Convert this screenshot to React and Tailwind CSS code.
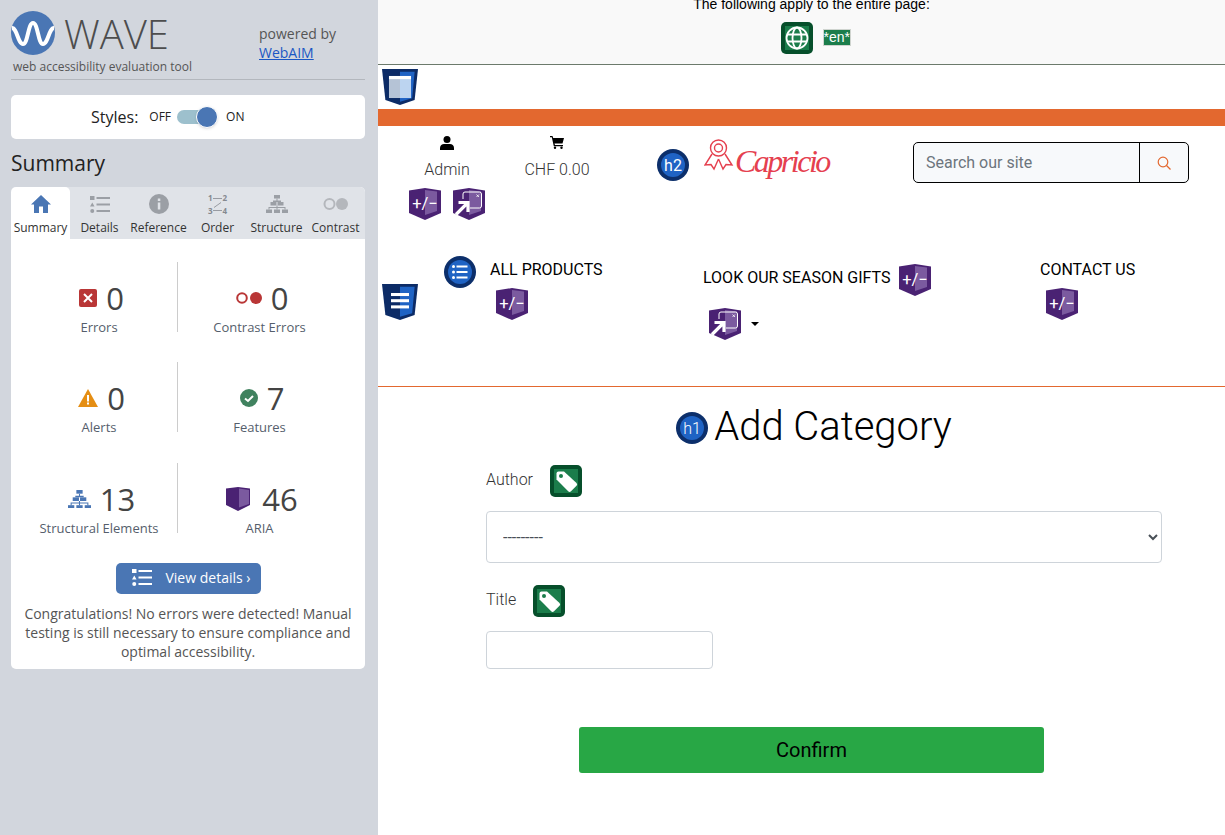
import React from "react";

const Shield = ({ size = 32, dark = "#4a2273", light = "#7b5a9f", children }) => (
  <svg width={size} height={size} viewBox="0 0 32 32" className="shrink-0 block">
    <polygon points="0,2.5 16,0 32,2.5 32,25 16,32 0,25" fill={dark} />
    <polygon points="16,2 28,3.5 28,23 16,27" fill={light} />
    {children}
  </svg>
);

const AriaIcon = () => (
  <Shield>
    <text x="16" y="20.5" textAnchor="middle" fill="#fff" fontSize="16.500" fontFamily="Roboto, sans-serif">
      +/−
    </text>
  </Shield>
);

const PopupIcon = () => (
  <Shield>
    <path d="M10 11V6a2 2 0 0 1 2-2h14.500a2 2 0 0 1 2 2v12a2 2 0 0 1-2 2H17" fill="none" stroke="#fff" strokeWidth="1" />
    <path d="M23.500 6.500l2.500 2.500m0-2.500L23.500 9" stroke="#fff" strokeWidth="0.8" />
    <path d="M3 26.500 L13.500 16 M5.500 14.500h9.500v9.500" fill="none" stroke="#fff" strokeWidth="3.200" />
  </Shield>
);

// landmark shield is narrower at the bottom than the aria one
const Landmark = ({ children }) => (
  <svg width="36" height="36" viewBox="0 0 32 32" className="shrink-0 block">
    <polygon points="0,0 32,0 29,27.500 16,32 3,27.500" fill="#0c2b66" />
    <polygon points="16,2.500 29,2.500 26.800,26 16,29" fill="#1f63c4" />
    {children}
  </svg>
);

const Badge = ({ children }) => (
  <svg width="32" height="32" viewBox="0 0 32 32" className="shrink-0 block">
    <circle cx="16" cy="16" r="16" fill="#0c2f6b" />
    <circle cx="16" cy="16" r="12" fill="#1f63c4" />
    {children}
  </svg>
);

const HeadingBadge = ({ label }) => (
  <Badge>
    <text x="16" y="21.500" textAnchor="middle" fill="#fff" fontSize="16" fontFamily="Roboto, sans-serif">
      {label}
    </text>
  </Badge>
);

const TagIcon = () => (
  <svg width="32" height="32" viewBox="0 0 32 32" className="shrink-0 block">
    <rect width="32" height="32" rx="5" fill="#064f2b" />
    <rect x="4" y="4" width="24" height="24" fill="#1b7d4b" />
    <path d="M6.500 8.500a2 2 0 0 1 2-2h5.500l12.500 11.500a2 2 0 0 1 0 2.800l-5.500 5.500a2 2 0 0 1-2.800 0L6.500 14.500z" fill="#fff" />
    <circle cx="11" cy="11" r="2" fill="#1b7d4b" />
  </svg>
);

const GlobeIcon = () => (
  <svg width="32" height="32" viewBox="0 0 32 32" className="shrink-0 block">
    <rect width="32" height="32" rx="5" fill="#064f2b" />
    <rect x="4" y="4" width="24" height="24" fill="#1b7d4b" />
    <g fill="none" stroke="#fff" strokeWidth="1.800">
      <circle cx="16" cy="16" r="10.500" />
      <ellipse cx="16" cy="16" rx="4.500" ry="10.500" />
      <path d="M6 12.500h20M6 19.500h20" />
    </g>
  </svg>
);

const ListLines = ({ color }) => (
  <svg width="20" height="17" viewBox="0 0 20 17" className="block">
    <g fill={color}>
      <rect x="0" y="0" width="4.500" height="4" />
      <polygon points="2.250,6.500 4.500,10.500 0,10.500" />
      <circle cx="2.250" cy="15" r="2" />
      <rect x="6.500" y="1" width="13.500" height="2" />
      <rect x="6.500" y="7.500" width="13.500" height="2" />
      <rect x="6.500" y="14" width="13.500" height="2" />
    </g>
  </svg>
);

const TreeIcon = ({ color, size = 22 }) => (
  <svg width={size} height={size * 0.82} viewBox="0 0 22 18" className="block">
    <g fill={color}>
      <rect x="8" y="0" width="6" height="3.500" />
      <rect x="4.500" y="7" width="6" height="3.500" />
      <rect x="11.500" y="7" width="6" height="3.500" />
      <rect x="0" y="14.500" width="6" height="3.500" />
      <rect x="8" y="14.500" width="6" height="3.500" />
      <rect x="16" y="14.500" width="6" height="3.500" />
      <path d="M10.500 3.500h1v3.500h-1zM7 5.500h8v1.500H7zM3 12h16v1h-16zM2.500 12h1v2.500h-1zM10.500 10.500h1v4h-1zM18.500 12h1v2.500h-1z" />
    </g>
  </svg>
);

const tabs = [
  {
    label: "Summary",
    active: true,
    icon: (
      <svg width="20" height="18" viewBox="0 0 20 18">
        <path d="M10 0 L20 9.500 H17 V18 H12 V11.500 H8 V18 H3 V9.500 H0 Z" fill="#4a76b4" />
      </svg>
    ),
  },
  { label: "Details", icon: <ListLines color="#9b9fa5" /> },
  {
    label: "Reference",
    icon: (
      <svg width="20" height="20" viewBox="0 0 20 20">
        <circle cx="10" cy="10" r="10" fill="#9b9fa5" />
        <rect x="8.800" y="8.500" width="2.500" height="7" fill="#e0e3e8" />
        <rect x="8.800" y="4.500" width="2.500" height="2.500" fill="#e0e3e8" />
      </svg>
    ),
  },
  {
    label: "Order",
    icon: (
      <svg width="20" height="20" viewBox="0 0 20 20" className="overflow-visible" fontFamily="'Open Sans', sans-serif" fontSize="8" fontWeight="700" fill="#85898f">
        <text x="0" y="7">1</text>
        <text x="14.500" y="7">2</text>
        <text x="0" y="19.500">3</text>
        <text x="14.500" y="19.500">4</text>
        <path d="M5 4.500h9M5 16.500h9M13 8.500l-7 5" stroke="#85898f" strokeWidth="0.800" fill="none" />
      </svg>
    ),
  },
  { label: "Structure", icon: <TreeIcon color="#9b9fa5" /> },
  {
    label: "Contrast",
    icon: (
      <svg width="26" height="14" viewBox="0 0 26 14">
        <circle cx="6.500" cy="7" r="5" fill="none" stroke="#b4b7bc" strokeWidth="2" />
        <circle cx="19" cy="7" r="6" fill="#b4b7bc" />
      </svg>
    ),
  },
];

const stats = [
  {
    value: "0",
    label: "Errors",
    icon: (
      <svg width="18" height="18" viewBox="0 0 18 18">
        <rect width="18" height="18" rx="2" fill="#b93636" />
        <path d="M5 5l8 8m0-8l-8 8" stroke="#fff" strokeWidth="2" />
      </svg>
    ),
  },
  {
    value: "0",
    label: "Contrast Errors",
    icon: (
      <svg width="26" height="12" viewBox="0 0 26 12">
        <circle cx="6" cy="6" r="4.800" fill="none" stroke="#b93636" strokeWidth="2" />
        <circle cx="20" cy="6" r="6" fill="#b93636" />
      </svg>
    ),
  },
  {
    value: "0",
    label: "Alerts",
    icon: (
      <svg width="20" height="18" viewBox="0 0 20 18">
        <polygon points="10,0 20,18 0,18" fill="#e58e13" />
        <rect x="9" y="6" width="2" height="6.500" fill="#fff" />
        <rect x="9" y="13.500" width="2" height="2" fill="#fff" />
      </svg>
    ),
  },
  {
    value: "7",
    label: "Features",
    icon: (
      <svg width="18" height="18" viewBox="0 0 18 18">
        <circle cx="9" cy="9" r="9" fill="#40825f" />
        <path d="M5 9.500l3 2.500 5-5" fill="none" stroke="#fff" strokeWidth="2" />
      </svg>
    ),
  },
  { value: "13", label: "Structural Elements", icon: <TreeIcon color="#4a76b4" size={23} /> },
  {
    value: "46",
    label: "ARIA",
    icon: (
      <svg width="24" height="24" viewBox="0 0 24 24" className="mr-[3px]">
        <polygon points="0,1.500 12,0 24,1.500 24,18 12,24 0,18" fill="#4a2273" />
        <polygon points="13,1.500 23,3 23,17 13,20.500" fill="#7b5a9f" />
      </svg>
    ),
  },
];

const Sidebar = () => (
  <aside className="w-[378px] shrink-0 bg-[#d2d6dd] pl-[11px] pr-[13px] font-['Open_Sans',sans-serif]">
    <div className="h-[80px] border-b border-[#b3b7bd]">
      <div className="flex pt-[11px]">
        <svg width="44" height="44" viewBox="0 0 44 44" className="shrink-0">
          <circle cx="22" cy="22" r="22" fill="#4a76b4" />
          <path d="M1 17 C6 17 7 33 12 33 C17 33 17 12 22 12 C27 12 27 33 32 33 C37 33 38 17 43 17" fill="none" stroke="#fff" strokeWidth="4" />
        </svg>
        <span className="ml-[9px] mt-[1px] text-[40px] leading-[44px] font-light text-[#4d4d4d]">WAVE</span>
        <div className="ml-auto mr-[26px] mt-[13px] w-[80px] text-[14px] leading-[19px] text-[#555]">
          powered by
          <a href="#webaim" className="block text-[#1a56c4] underline">WebAIM</a>
        </div>
      </div>
      <p className="ml-[2px] -mt-[3px] text-[12px] leading-[16px] text-[#555]">web accessibility evaluation tool</p>
    </div>

    <div className="mt-[15px] h-[44px] bg-white rounded-[5px] flex items-center pl-[80px] gap-[11px] text-[#222]">
      <span className="text-[16px]">Styles:</span>
      <div className="flex items-center gap-[6px] text-[12px]">
        <span>OFF</span>
        <span className="relative w-[30px] h-[14px] rounded-full bg-[#9dc0cd]">
          <span className="absolute right-[-11px] top-[-4px] w-[22px] h-[22px] rounded-full bg-[#4a76b4] border border-white shadow"></span>
        </span>
        <span className="ml-[13px]">ON</span>
      </div>
    </div>

    <h2 className="mt-[10px] text-[21px] leading-[28px] text-[#222]">Summary</h2>

    <div className="mt-[10px] bg-white rounded-[5px] overflow-hidden">
      <div className="grid grid-cols-6 bg-[#e0e3e8] h-[52px]">
        {tabs.map((tab) => (
          <div
            key={tab.label}
            className={`flex flex-col items-center text-[12px] leading-[16px] text-[#333] ${tab.active ? "bg-white rounded-t-[5px]" : ""}`}
          >
            <div className="h-[33px] flex items-center justify-center pt-[1px]">{tab.icon}</div>
            {tab.label}
          </div>
        ))}
      </div>

      <div className="grid grid-cols-2 mt-[23px] gap-y-[30px] w-[332px]">
        {stats.map((stat, i) => (
          <div
            key={stat.label}
            className={`h-[70px] flex flex-col items-center ${i % 2 === 0 ? "border-r border-[#ccc] w-[167px] pl-[10px]" : "w-[165px]"} ${i >= 4 ? "mt-px" : ""}`}
          >
            <div className="flex items-center gap-[9px] h-[32px] mt-[20px] ml-[5px] shrink-0">
              {stat.icon}
              <span className="text-[31px] leading-[32px] text-[#444]">{stat.value}</span>
            </div>
            <span className="mt-[4px] shrink-0 text-[13px] leading-[18px] text-[#555e6c]">{stat.label}</span>
          </div>
        ))}
      </div>

      <div className="flex justify-center mt-[30px]">
        <a href="#details" className="w-[145px] h-[31px] pl-[7px] pb-[2px] rounded-[5px] bg-[#4a76b4] text-white flex items-center justify-center gap-[13px] text-[14px]">
          <ListLines color="#fff" />
          View details ›
        </a>
      </div>
      <p className="mt-[10px] pb-[8px] px-[10px] text-center text-[14px] leading-[19px] text-[#555]">
        Congratulations! No errors were detected! Manual testing is still necessary to ensure compliance and optimal accessibility.
      </p>
    </div>
  </aside>
);

const Header = () => (
  <div className="flex h-[100px] text-[#333]">
    <div className="ml-[26px] w-[86px] flex flex-col items-center">
      <svg width="14" height="14" viewBox="0 0 14 14" className="mt-[10px]">
        <circle cx="7" cy="3.500" r="3.500" />
        <path d="M0 14v-2c0-2.500 2-4 4-4h6c2 0 4 1.500 4 4v2z" />
      </svg>
      <span className="mt-[10px] text-[16px] leading-[19px] font-light">Admin</span>
      <div className="flex gap-[12px] mt-[9px]">
        <AriaIcon />
        <PopupIcon />
      </div>
    </div>
    <div className="w-[134px] flex flex-col items-center">
      <svg width="14" height="13" viewBox="0 0 14 13" className="mt-[10px]">
        <path d="M0 0h2.500l.7 2H14l-1.500 5.500H4.500L5 9h8v1.200H3.800L1.800 1.200H0z" />
        <circle cx="5" cy="11.800" r="1.200" />
        <circle cx="11.500" cy="11.800" r="1.200" />
      </svg>
      <span className="mt-[11px] text-[16px] leading-[19px] font-light">CHF 0.00</span>
    </div>
    <div className="ml-[33px] mt-[23px]">
      <HeadingBadge label="h2" />
    </div>
    <div className="ml-[15px] mt-[13px] flex items-start">
      <svg width="30" height="32" viewBox="0 0 30 32" fill="none" stroke="#e5404f" strokeWidth="1.400">
        <circle cx="14.500" cy="9" r="8" />
        <circle cx="14.500" cy="9" r="4" />
        <path d="M8 15L1 26l6-.5 3 4.500 4.500-10M21 15l7 11-6-.5-3 4.500-4.500-10" />
      </svg>
      <span className="ml-[1px] mt-[2px] text-[32px] leading-[40px] tracking-[-2.500px] italic font-['Liberation_Serif',serif] text-[#e5404f]">Capricio</span>
    </div>
    <div className="ml-auto mr-[36px] mt-[16px] w-[276px] h-[41px] flex border border-black rounded-[5px] bg-[#f7f9fb]">
      <span className="flex-1 border-r border-black pl-[12px] text-[16px] leading-[39px] text-[#6c757d]">Search our site</span>
      <span className="w-[48px] flex items-center justify-center">
        <svg width="14" height="14" viewBox="0 0 14 14" fill="none" stroke="#e3682f" strokeWidth="1.200">
          <circle cx="6" cy="6" r="4.800" />
          <path d="M9.500 9.500L13.500 13.500" />
        </svg>
      </span>
    </div>
  </div>
);

const Nav = () => (
  <nav className="flex h-[161px] border-b border-[#e3682f] text-[16px] leading-[20px] text-black">
    <div className="ml-[4px] mt-[58px]">
      <Landmark>
        <g fill="#fff">
          <rect x="8" y="8" width="16" height="2.700" />
          <rect x="8" y="13.500" width="16" height="2.700" />
          <rect x="8" y="19" width="16" height="2.700" />
        </g>
      </Landmark>
    </div>
    <div className="ml-[26px] mt-[30px]">
      <Badge>
        <g fill="#fff">
          <circle cx="9.500" cy="10.500" r="1.500" />
          <circle cx="9.500" cy="16" r="1.500" />
          <circle cx="9.500" cy="21.500" r="1.500" />
          <rect x="12.500" y="9.500" width="11" height="2" />
          <rect x="12.500" y="15" width="11" height="2" />
          <rect x="12.500" y="20.500" width="11" height="2" />
        </g>
      </Badge>
    </div>
    <div className="ml-[14px] w-[213px] mt-[34px]">
      ALL PRODUCTS
      <div className="ml-[6px] mt-[8px]">
        <AriaIcon />
      </div>
    </div>
    <div className="w-[337px] mt-[38px]">
      <div className="flex items-center gap-[9px]">
        <span className="mb-[4px]">LOOK OUR SEASON GIFTS</span>
        <AriaIcon />
      </div>
      <div className="flex items-center ml-[6px] mt-[12px] gap-[10px]">
        <PopupIcon />
        <span className="w-0 h-0 border-x-[4px] border-x-transparent border-t-[4px] border-t-black"></span>
      </div>
    </div>
    <div className="mt-[34px]">
      CONTACT US
      <div className="ml-[6px] mt-[8px]">
        <AriaIcon />
      </div>
    </div>
  </nav>
);

const Form = () => (
  <main className="text-[#333]">
    <h1 className="mt-[16px] flex items-center justify-center gap-[6px] ml-[25px] h-[48px] text-[40px] leading-[48px] font-light text-black">
      <div className="mt-[2px]">
        <HeadingBadge label="h1" />
      </div>
      Add Category
    </h1>
    <div className="ml-[108px] mr-[63px] mt-[14px]">
      <div className="flex items-center gap-[17px] h-[32px]">
        <span className="mb-[2px] text-[16px] font-light">Author</span>
        <TagIcon />
      </div>
      <select className="mt-[14px] block w-full h-[52px] pl-[12px] pr-[4px] bg-white border border-[#ced4da] rounded-[4px] text-[16px] text-[#495057]">
        <option>---------</option>
      </select>
      <div className="flex items-center gap-[17px] h-[32px] mt-[22px]">
        <span className="mb-[2px] text-[16px] font-light">Title</span>
        <TagIcon />
      </div>
      <input type="text" aria-label="Title" className="mt-[14px] block w-[227px] h-[38px] bg-white border border-[#ced4da] rounded-[4px]" />
      <button type="button" className="block mt-[58px] ml-[93px] w-[465px] h-[46px] rounded-[3px] bg-[#28a745] text-[20px] text-black">
        Confirm
      </button>
    </div>
  </main>
);

const App = () => {
  return (
    <div className="flex min-h-[835px] h-[835px] overflow-hidden">
      <Sidebar />
      <div className="flex-1 min-w-0 bg-white font-['Roboto',sans-serif]">
        <div className="h-[65px] pl-[20px] bg-[#f9f9f9] border-b border-[#6c7a6c] flex flex-col items-center overflow-hidden">
          <p className="-mt-[6px] text-[14px] leading-[20px] text-black font-['Liberation_Sans',sans-serif]">
            The following apply to the entire page:
          </p>
          <div className="flex items-center gap-[10px] mt-[8px] ml-[8px]">
            <GlobeIcon />
            <span className="w-[28px] h-[17px] mb-[2px] text-center bg-[#1b7d4b] border border-[#cfd4cf] text-white text-[14px] leading-[15px] font-['Liberation_Sans',sans-serif]">*en*</span>
          </div>
        </div>
        <div className="h-[44px] pl-[4px] pt-[4px]">
          <Landmark>
            <rect x="6.200" y="6.200" width="9.800" height="19.600" fill="#b5c3d6" />
            <rect x="16" y="6.200" width="9.800" height="19.600" fill="#bcd4f0" />
            <rect x="6.200" y="6.200" width="19.600" height="2.800" fill="#fff" />
          </Landmark>
        </div>
        <div className="h-[17px] bg-[#e3682f]"></div>
        <Header />
        <Nav />
        <Form />
      </div>
    </div>
  );
};

export default App;
